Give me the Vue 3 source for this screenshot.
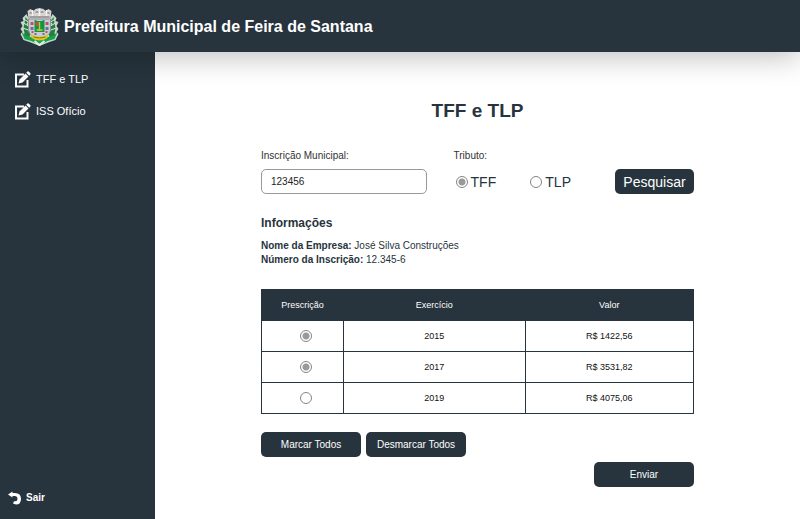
<script setup>
import { ref } from 'vue'

const inscricao = ref('123456')
const tributo = ref('TFF')
const linhas = ref([
  { exercicio: '2015', valor: 'R$ 1422,56', marcado: true },
  { exercicio: '2017', valor: 'R$ 3531,82', marcado: true },
  { exercicio: '2019', valor: 'R$ 4075,06', marcado: false },
])
const menu = ['TFF e TLP', 'ISS Ofício']

function marcarTodos(valor) {
  linhas.value.forEach((linha) => { linha.marcado = valor })
}
</script>

<template>
  <div class="app">
    <header class="topbar">
      <svg class="crest" viewBox="0 0 38 38" aria-hidden="true">
        <path d="M6 6 2 10 3 13 0 14 2 18 0 21 2 24 0 26 3 32 9 34 14 36 19 38 24 36 29 34 35 32 38 26 36 24 38 21 36 18 38 14 35 13 36 10 32 6 29 12 9 12Z" fill="#c9d6cc" />
        <path d="M5 9 8 13 6 16 9 19 7 22 10 25 9 29 14 32 19 34 24 32 29 29 28 25 31 22 29 19 32 16 30 13 33 9 34 15 35 20 34 25 35 28 31 31 26 32 19 36 12 32 7 31 3 28 4 25 3 20 4 15Z" fill="#267d42" />
        <path d="M3 15 8 18M2 20 8 22M3 11 8 14M35 15 30 18M36 20 30 22M35 11 30 14" stroke="#dfe9e0" stroke-width="1" />
        <path d="M1 24Q8 31 14 28L19 31 24 28Q30 31 37 24L34 31 27 33 23 35 15 35 11 33 4 31Z" fill="#12a34d" />
        <path d="M7 3 10 1 13 3 15 1 19 0 23 1 25 3 28 1 31 3 30 11 8 11Z" fill="#d6d3d0" />
        <path d="M9 5h4M15 4h3M20 4h3M26 5h3M9 9h20" stroke="#8d8c8c" stroke-width="1.5" />
        <path d="M12 2v6M19 1v7M26 2v6" stroke="#f5f3f1" stroke-width="1.5" />
        <path d="M8 11H30V22Q29 29 19 31Q9 29 8 22Z" fill="#c9ccd6" stroke="#8b9292" />
        <path d="M10 14h3v3h-3zM25 14h3v3h-3zM11 23h2v2h-2zM25 23h2v2h-2z" fill="#c0525a" />
        <path d="M10 19h3v3h-3zM25 19h3v3h-3zM14 25h2v2h-2zM22 25h2v2h-2zM14 12h2v1h-2zM22 12h2v1h-2z" fill="#6573a3" />
        <path d="M14 13h10v11h-10z" fill="#129447" />
        <path d="M15 14h3v4h-3z" fill="#a65f32" />
        <path d="M19 14v9M16 22h6" stroke="#c9c437" stroke-width="1.4" />
        <path d="M10 26Q19 31 28 26L27 30Q19 35 11 30Z" fill="#dcc623" />
        <path d="M13 29Q19 31 25 29" fill="none" stroke="#80782c" stroke-width="1" />
        <path d="M14 33 19 37 24 33" fill="none" stroke="#e5ebe5" stroke-width="2" />
      </svg>
      <span class="brand">Prefeitura Municipal de Feira de Santana</span>
    </header>

    <div class="body">
      <aside class="sidebar">
        <nav class="menu">
          <a v-for="item in menu" :key="item" class="menu-link" href="#">
            <svg class="edit-icon" viewBox="0 0 17 17" aria-hidden="true">
              <path d="M10 3.5H2V15.5H13.5V9" fill="none" stroke="#fff" stroke-width="2" />
              <path d="M4.500 12.500 5.500 8.500 11.500 2.500 14.500 5.500 8.500 11.500Z" fill="#fff" />
              <path d="M12.200 1.800 13.400.6Q14.200 0 15 .8L16.200 2Q17 2.800 16.400 3.600L15.200 4.800Z" fill="#fff" />
            </svg>
            {{ item }}
          </a>
        </nav>
        <a class="logout" href="#">
          <svg class="back-icon" viewBox="0 0 13 14" aria-hidden="true">
            <path d="M0 3.500 4.500.5V2H7Q13 2 13 8Q13 13.500 8 13.500L5 12.500 6 10.200Q9.500 11 9.500 8Q9.500 5 6.500 5H4.500V6.500Z" fill="#fff" />
          </svg>
          Sair
        </a>
      </aside>

      <main class="main">
        <div class="content">
          <h1 class="title">TFF e TLP</h1>

          <form class="search" @submit.prevent>
            <div class="field">
              <label class="caption" for="inscricao">Inscrição Municipal:</label>
              <input id="inscricao" v-model="inscricao" class="text-input" type="text">
            </div>
            <fieldset class="field tributo">
              <legend class="caption">Tributo:</legend>
              <div class="options">
                <label class="option"><input v-model="tributo" class="radio" type="radio" name="tributo" value="TFF">TFF</label>
                <label class="option"><input v-model="tributo" class="radio" type="radio" name="tributo" value="TLP">TLP</label>
              </div>
            </fieldset>
            <button class="button search-button" type="submit">Pesquisar</button>
          </form>

          <section class="info">
            <h2 class="subtitle">Informações</h2>
            <p><strong>Nome da Empresa:</strong> José Silva Construções</p>
            <p><strong>Número da Inscrição:</strong> 12.345-6</p>
          </section>

          <table class="table">
            <thead>
              <tr>
                <th class="col-mark">Prescrição</th>
                <th class="col-year">Exercício</th>
                <th>Valor</th>
              </tr>
            </thead>
            <tbody>
              <tr v-for="linha in linhas" :key="linha.exercicio">
                <td class="mark">
                  <input
                    v-model="linha.marcado"
                    class="radio"
                    type="radio"
                    :name="'prescricao-' + linha.exercicio"
                    :value="true"
                    :aria-label="'Prescrição ' + linha.exercicio"
                  >
                </td>
                <td>{{ linha.exercicio }}</td>
                <td>{{ linha.valor }}</td>
              </tr>
            </tbody>
          </table>

          <div class="actions">
            <button class="button" type="button" @click="marcarTodos(true)">Marcar Todos</button>
            <button class="button" type="button" @click="marcarTodos(false)">Desmarcar Todos</button>
          </div>
          <div class="submit-row">
            <button class="button" type="button">Enviar</button>
          </div>
        </div>
      </main>
    </div>
  </div>
</template>

<style>
body {
  background: #fff;
}
</style>

<style scoped>
.app {
  display: flex;
  flex-direction: column;
  min-height: 100vh;
  font-family: "Liberation Sans", Arial, sans-serif;
  color: #27343d;
}

.app * {
  box-sizing: border-box;
}

.topbar {
  position: relative;
  z-index: 1;
  display: flex;
  align-items: center;
  gap: 5px;
  padding: 8px 20px 6px;
  background: #27343d;
  box-shadow: 0 4px 30px rgba(0, 0, 0, 0.27);
}

.crest {
  width: 39px;
  height: 38px;
}

.brand {
  color: #fff;
  font-size: 16px;
  font-weight: bold;
}

.body {
  display: flex;
  flex: 1;
}

.sidebar {
  display: flex;
  flex-direction: column;
  justify-content: space-between;
  flex: 0 0 155px;
  padding: 17px 8px 13px;
  background: #27343d;
}

.menu {
  display: flex;
  flex-direction: column;
  gap: 12px;
  padding-left: 6px;
}

.menu-link,
.logout {
  display: flex;
  align-items: center;
  color: #fff;
  text-decoration: none;
}

.menu-link {
  gap: 5px;
  font-size: 11px;
  line-height: 20px;
}

.edit-icon {
  width: 17px;
  height: 17px;
}

.logout {
  gap: 5px;
  font-size: 10px;
  font-weight: bold;
  line-height: 16px;
}

.back-icon {
  width: 13px;
  height: 14px;
}

.main {
  flex: 1;
  padding: 47px 16px 31px;
}

.content {
  max-width: 433px;
  margin: 0 auto;
}

.title {
  margin: 0 0 26px;
  font-size: 19px;
  line-height: 24px;
  text-align: center;
}

.search {
  display: grid;
  grid-template-columns: 165fr 134fr 79px;
  column-gap: 27px;
  align-items: end;
}

.field {
  min-width: 0;
  margin: 0;
  padding: 0;
  border: 0;
}

.caption {
  display: block;
  margin-bottom: 6px;
  padding: 0;
  color: #333;
  font-size: 10px;
  line-height: 14px;
}

.text-input {
  display: block;
  width: 100%;
  height: 25px;
  padding: 0 9px;
  border: 1px solid #999;
  border-radius: 5px;
  background: #fff;
  color: #222;
  font-family: inherit;
  font-size: 10px;
}

.options {
  display: flex;
  align-items: center;
  justify-content: space-between;
  height: 25px;
  padding: 0 17px 0 2px;
}

.option {
  display: flex;
  align-items: center;
  gap: 3px;
  font-size: 14px;
}

.radio {
  appearance: none;
  display: block;
  width: 12px;
  height: 12px;
  margin: 0;
  border: 1px solid #858585;
  border-radius: 50%;
  background: #fff;
}

.radio:checked {
  background: radial-gradient(circle, #999 0 3px, #fff 4px);
}

.button {
  width: 100px;
  height: 25px;
  padding: 0;
  border: 0;
  border-radius: 5px;
  background: #27343d;
  color: #fff;
  font-family: inherit;
  font-size: 10px;
}

.search-button {
  width: 100%;
  font-size: 14px;
}

.info {
  margin: 21px 0 22px;
  font-size: 10px;
  line-height: 14px;
}

.info p {
  margin: 0;
}

.subtitle {
  margin: 0 0 8px;
  font-size: 12px;
  line-height: 16px;
}

.table {
  width: 100%;
  border-collapse: collapse;
  table-layout: fixed;
  font-size: 9px;
  text-align: center;
}

.table th,
.table td {
  height: 31px;
  padding: 0;
  border: 1px solid #27343d;
}

.table th {
  background: #27343d;
  color: #fff;
  font-weight: normal;
}

.table td {
  color: #111;
}

.col-mark {
  width: 19%;
}

.col-year {
  width: 42%;
}

.table .mark {
  padding-left: 6px;
}

.mark .radio {
  margin: 0 auto;
}

.actions {
  display: flex;
  gap: 5px;
  margin-top: 18px;
}

.submit-row {
  display: flex;
  justify-content: flex-end;
  margin-top: 5px;
}
</style>
